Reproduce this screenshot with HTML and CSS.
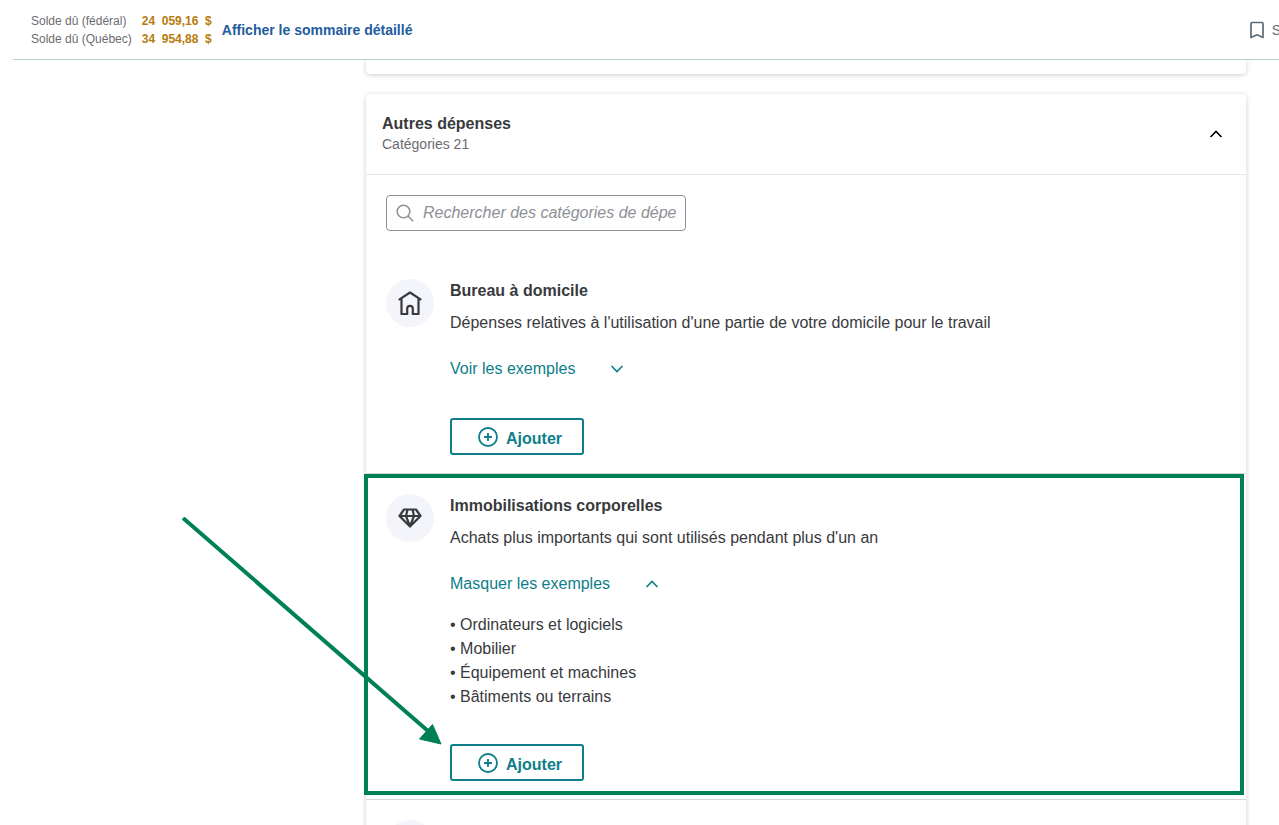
FILE: index.html
```
<!DOCTYPE html>
<html lang="fr">
<head>
  <meta charset="UTF-8">
  <title>Autres dépenses</title>
  <link rel="stylesheet" href="styles.css">
</head>
<body>
  <header class="sommaire">
    <dl class="soldes">
      <dt>Solde dû (fédéral)</dt>
      <dd>24&nbsp; 059,16&nbsp; $</dd>
      <dt>Solde dû (Québec)</dt>
      <dd>34&nbsp; 954,88&nbsp; $</dd>
    </dl>
    <a class="lien-sommaire" href="#">Afficher le sommaire détaillé</a>
    <button class="signet" type="button">
      <svg width="16" height="18" viewBox="0 0 16 18" fill="none" stroke="#5d6b75" stroke-width="1.7" stroke-linejoin="round">
        <path d="M2 2.700Q2 1.500 3.200 1.500H12.800Q14 1.500 14 2.700V16.500L8 13.800L2 16.500Z"/>
      </svg>
      <span>S</span>
    </button>
  </header>

  <main>
    <section class="carte carte-precedente"></section>

    <section class="carte">
      <div class="carte-entete">
        <div>
          <h2>Autres dépenses</h2>
          <p>Catégories 21</p>
        </div>
        <button class="replier" type="button" aria-label="Replier">
          <svg width="14" height="8" viewBox="0 0 14 8" fill="none" stroke="#000" stroke-width="1.6"><path d="M1.500 7L7 1.500L12.500 7"/></svg>
        </button>
      </div>

      <div class="recherche">
        <svg width="18" height="18" viewBox="0 0 18 18" fill="none" stroke="#8d9096" stroke-width="1.6"><circle cx="7.500" cy="7.500" r="6.300"/><path d="M12 12L17.200 17.200"/></svg>
        <input type="text" aria-label="Rechercher" placeholder="Rechercher des catégories de dépenses">
      </div>

      <article class="categorie">
        <div class="icone">
          <svg width="24" height="24" viewBox="0 0 24 24" fill="none" stroke="#393a3d" stroke-width="2.200" stroke-linejoin="round" stroke-linecap="round">
            <path d="M1.500 8.300L12 1.500L22.500 8.300M3.500 7.200V23H9.200V17.500Q9.200 14.800 12 14.800T14.800 17.500V23H20.500V7.200"/>
          </svg>
        </div>
        <div class="contenu">
          <h3>Bureau à domicile</h3>
          <p>Dépenses relatives à l'utilisation d'une partie de votre domicile pour le travail</p>
          <button class="exemples" type="button" aria-expanded="false">
            Voir les exemples
            <svg width="14" height="8" viewBox="0 0 14 8" fill="none" stroke="currentColor" stroke-width="1.6"><path d="M1.500 1L7 6.500L12.500 1"/></svg>
          </button>
          <button class="ajouter" type="button">
            <svg width="20" height="20" viewBox="0 0 20 20" fill="none" stroke="currentColor" stroke-width="1.8"><circle cx="10" cy="10" r="9"/><path d="M6 10H14M10 6V14"/></svg>
            <span>Ajouter</span>
          </button>
        </div>
      </article>

      <article class="categorie">
        <div class="icone">
          <svg width="24" height="20" viewBox="0 0 24 20" fill="none" stroke="#393a3d" stroke-width="2.200" stroke-linejoin="round">
            <path d="M6 1.500H18L22.500 8L12 18.500L1.500 8ZM1.500 8H22.500M9.500 1.500L8 8L12 18.500L16 8L14.500 1.500"/>
          </svg>
        </div>
        <div class="contenu">
          <h3>Immobilisations corporelles</h3>
          <p>Achats plus importants qui sont utilisés pendant plus d'un an</p>
          <button class="exemples" type="button" aria-expanded="true">
            Masquer les exemples
            <svg width="14" height="8" viewBox="0 0 14 8" fill="none" stroke="currentColor" stroke-width="1.6"><path d="M1.500 7L7 1.500L12.500 7"/></svg>
          </button>
          <ul>
            <li>Ordinateurs et logiciels</li>
            <li>Mobilier</li>
            <li>Équipement et machines</li>
            <li>Bâtiments ou terrains</li>
          </ul>
          <button class="ajouter" type="button">
            <svg width="20" height="20" viewBox="0 0 20 20" fill="none" stroke="currentColor" stroke-width="1.8"><circle cx="10" cy="10" r="9"/><path d="M6 10H14M10 6V14"/></svg>
            <span>Ajouter</span>
          </button>
        </div>
        <div class="cadre"></div>
        <svg class="fleche" width="260" height="230" viewBox="0 0 260 230">
          <path d="M1 1L246 214" stroke="#008055" stroke-width="4"/>
          <path d="M259 227L250.500 207.500L237.500 222Z" fill="#008055" stroke="#008055"/>
        </svg>
      </article>

      <article class="categorie">
        <div class="icone"></div>
      </article>
    </section>
  </main>
</body>
</html>
```

FILE: styles.css
```
* {
  box-sizing: border-box;
}
body {
  margin: 0;
  height: 100vh;
  overflow: hidden;
  background-color: #fff;
  color: #393a3d;
  font-family: "Liberation Sans", Arial, sans-serif;
  font-size: 16px;
  line-height: 24px;
}
h2, h3, p, ul, dl, dd {
  margin: 0;
}
button {
  padding: 0;
  border: none;
  background: none;
  font: inherit;
  cursor: pointer;
}

/* barre du haut */
.sommaire {
  position: relative;
  z-index: 1;
  display: flex;
  align-items: center;
  height: 60px;
  margin-left: 13px;
  padding-left: 18px;
  background-color: #fff;
  border-bottom: 1px solid #bac9cd;
  overflow: hidden;
}
.soldes {
  display: grid;
  grid-template-columns: auto auto;
  column-gap: 10px;
  font-size: 12px;
  line-height: 18px;
  color: #6b6c72;
}
.soldes dd {
  font-weight: bold;
  color: #b87c0c;
}
.lien-sommaire {
  margin-left: 10px;
  font-size: 14px;
  font-weight: bold;
  color: #1f5c9e;
  text-decoration: none;
}
.signet {
  display: flex;
  align-items: center;
  gap: 7px;
  margin-left: auto;
  margin-right: -2px;
  font-size: 14px;
  color: #6b6c72;
}

/* cartes */
main {
  margin: 0 33px 0 366px;
}
.carte {
  margin-bottom: 20px;
  background-color: #fff;
  border-radius: 4px;
  box-shadow: 0 1px 5px rgba(0, 0, 0, 0.2);
}
.carte-precedente {
  height: 14px;
  border-radius: 0 0 4px 4px;
}
.carte-entete {
  display: flex;
  align-items: center;
  justify-content: space-between;
  padding: 20px 23px 20px 16px;
  border-bottom: 1px solid #e3e5e8;
}
.carte-entete h2 {
  font-size: 16px;
  line-height: 20px;
}
.carte-entete p {
  font-size: 14px;
  line-height: 20px;
  color: #6b6c72;
}
.replier {
  display: flex;
}

.recherche {
  display: flex;
  align-items: center;
  padding: 20px 20px 28px;
}
.recherche svg {
  margin-left: 10px;
  margin-right: -28px;
  z-index: 1;
}
.recherche input {
  width: 300px;
  height: 36px;
  padding: 0 8px 0 36px;
  border: 1px solid #8d9096;
  border-radius: 4px;
  font: italic 16px "Liberation Sans", Arial, sans-serif;
}
.recherche input::placeholder {
  color: #8d9096;
}

.categorie {
  position: relative;
  display: flex;
  gap: 16px;
  padding: 20px 20px 18px;
  border-bottom: 1px solid #d4d7dc;
}
.icone {
  display: flex;
  align-items: center;
  justify-content: center;
  flex-shrink: 0;
  width: 48px;
  height: 48px;
  border-radius: 50%;
  background-color: #f4f5fa;
}
.contenu {
  display: flex;
  flex-direction: column;
  align-items: flex-start;
}
.contenu h3 {
  font-size: 16px;
  margin-bottom: 8px;
}
.exemples {
  display: flex;
  align-items: center;
  gap: 35px;
  margin-top: 22px;
  color: #0d7e8a;
}
.contenu ul {
  margin-top: 17px;
  margin-bottom: -2px;
  padding: 0;
  list-style: none;
}
.contenu li::before {
  content: "• ";
}
.ajouter {
  display: flex;
  align-items: center;
  justify-content: center;
  gap: 8px;
  width: 134px;
  height: 37px;
  margin-top: 37px;
  padding-left: 6px;
  border: 2px solid #0d7e8a;
  border-radius: 3px;
  font-weight: bold;
  color: #0d7e8a;
}
.ajouter span {
  padding-top: 5px;
}

/* annotations */
.cadre {
  position: absolute;
  inset: 0 2px 4px -2px;
  border: 4px solid #008055;
  pointer-events: none;
}
.fleche {
  position: absolute;
  top: 43px;
  left: -184px;
  pointer-events: none;
}
```
